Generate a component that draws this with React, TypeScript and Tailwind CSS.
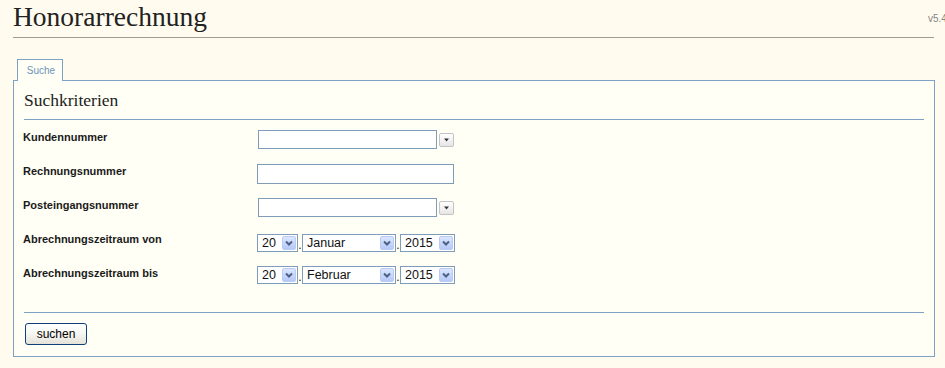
import React from "react";

const sans = { fontFamily: '"Liberation Sans", Arial, sans-serif' };
const serif = { fontFamily: '"Liberation Serif", "Times New Roman", serif' };

function ComboButton() {
  return (
    <div className="ml-[2px] mt-[3px] flex h-[14px] w-[15px] items-center justify-center rounded-[2px] border border-[#c3c3c3] bg-gradient-to-b from-[#ffffff] to-[#e6e6e6]">
      <svg width="7" height="4" viewBox="0 0 7 4">
        <polygon points="1,0.5 6,0.5 3.5,3.5" fill="#333" />
      </svg>
    </div>
  );
}

function Select({ value, w }: { value: string; w: string }) {
  return (
    <div
      className={`flex h-[18px] ${w} items-center border border-[#7f9db9] bg-white pl-[4px] pr-px`}
      style={sans}
    >
      <span className="flex-1 text-[12.5px] leading-[16px] text-[#111]">{value}</span>
      <div className="flex h-[14px] w-[14px] items-center justify-center rounded-[2px] border border-[#b9ccf6] bg-gradient-to-b from-[#dbe6fe] to-[#b6c9f7]">
        <svg width="8" height="6" viewBox="0 0 8 6">
          <polyline points="1,1.5 4,4.5 7,1.5" fill="none" stroke="#4d6185" strokeWidth="2" />
        </svg>
      </div>
    </div>
  );
}

function Dot() {
  return (
    <span className="flex h-[18px] w-[4px] items-end justify-center text-[12px] leading-[14px] text-[#111]" style={sans}>
      .
    </span>
  );
}

function DateRow({ month }: { month: string }) {
  return (
    <div className="flex items-start">
      <Select value="20" w="w-[41px]" />
      <Dot />
      <Select value={month} w="w-[94px]" />
      <Dot />
      <Select value="2015" w="w-[55px]" />
    </div>
  );
}

function Label({ children }: { children: React.ReactNode }) {
  return (
    <div className="-ml-px w-[234px] text-[11px] font-bold leading-[14px] text-[#1a1a1a]" style={sans}>
      {children}
    </div>
  );
}

export default function App() {
  return (
    <div className="relative min-h-[368px] w-[945px] overflow-hidden bg-[#fffcef]">
      <div className="ml-[13px] mr-[11px] h-[38px] border-b border-[#a19b95] pt-px">
        <h1 className="text-[27.5px] font-normal leading-[32px] text-[#222]" style={serif}>
          Honorarrechnung
        </h1>
      </div>
      <div className="absolute left-[928px] top-[13px] text-[10px] leading-[12px] text-[#858585]" style={sans}>
        v5.4
      </div>

      <div className="ml-[13px] mr-[10px] mt-[21px]">
        <div className="relative z-10 -mb-px ml-[4px] flex h-[22px] w-[46px] items-center justify-center border border-b-0 border-[#7ea1c6] bg-[#fffff5] pl-[2px]">
          <span className="text-[10px] leading-[12px] text-[#6f93b8]" style={sans}>
            Suche
          </span>
        </div>
        <div className="border border-[#7ea1c6] bg-[#fffff5] px-[10px]">
          <div className="border-b border-[#7ea1c6] pb-[9px] pt-[9px]">
            <h2 className="text-[17.5px] font-normal leading-[20px] text-[#222]" style={serif}>
              Suchkriterien
            </h2>
          </div>

          <div className="border-b border-[#7ea1c6] pb-[12px] pt-[10px]">
            <div className="flex h-[34px] items-start">
              <Label>Kundennummer</Label>
              <div className="ml-px h-[19px] w-[179px] border border-[#7f9db9] bg-white" />
              <ComboButton />
            </div>
            <div className="flex h-[34px] items-start">
              <Label>Rechnungsnummer</Label>
              <div className="h-[20px] w-[197px] border border-[#7f9db9] bg-white" />
            </div>
            <div className="flex h-[34px] items-start">
              <Label>Posteingangsnummer</Label>
              <div className="ml-px h-[19px] w-[179px] border border-[#7f9db9] bg-white" />
              <ComboButton />
            </div>
            <div className="flex h-[34px] items-start">
              <Label>Abrechnungszeitraum von</Label>
              <div className="mt-[2px]">
                <DateRow month="Januar" />
              </div>
            </div>
            <div className="flex h-[34px] items-start">
              <Label>Abrechnungszeitraum bis</Label>
              <div>
                <DateRow month="Februar" />
              </div>
            </div>
          </div>

          <div className="pb-[11px] pt-[10px]">
            <button
              className="ml-px flex h-[22px] w-[62px] items-center justify-center rounded-[3px] border border-[#0f3f78] bg-gradient-to-b from-[#ffffff] via-[#f6f6f2] to-[#e4e2d8] text-[12px] leading-[14px] text-black"
              style={sans}
            >
              suchen
            </button>
          </div>
        </div>
      </div>
    </div>
  );
}
